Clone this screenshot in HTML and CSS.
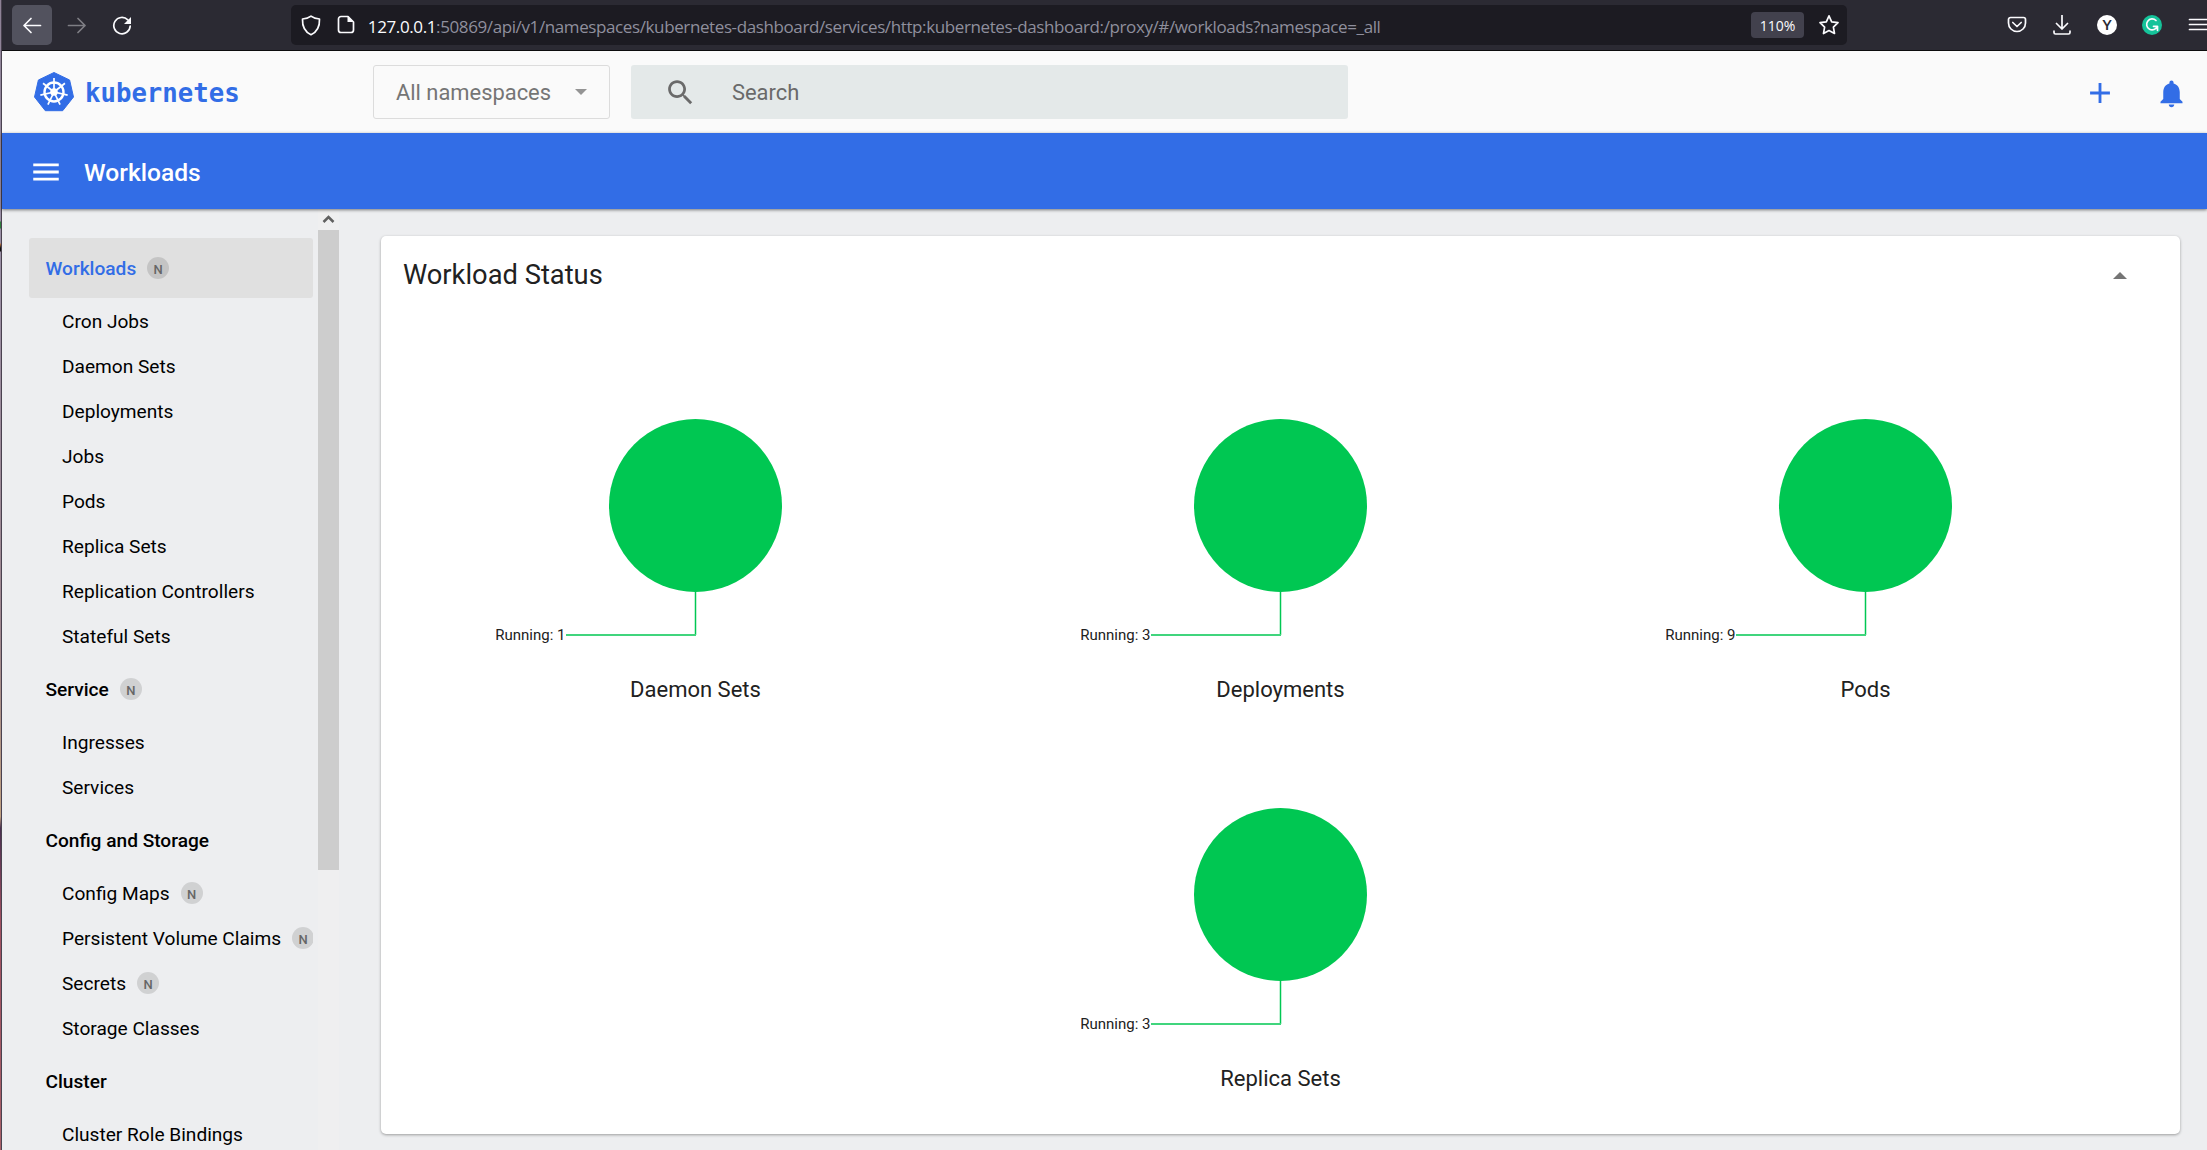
FILE: index.html
```html
<!DOCTYPE html>
<html lang="en">
<head>
<meta charset="utf-8">
<title>Kubernetes Dashboard</title>
<link rel="stylesheet" href="styles.css">
</head>
<body>
<div class="edge"></div>
<div class="window">
  <div class="chrome">
    <div class="nav-btn nav-active"><svg width="20" height="20" viewBox="0 0 20 20"><path d="M18.500 10.500H2M9 3.500L2 10.500l7 7"/></svg></div>
    <div class="nav-btn nav-dim"><svg width="20" height="20" viewBox="0 0 20 20"><path d="M1.500 10.500H18M11 3.500l7 7-7 7"/></svg></div>
    <div class="nav-btn nav-reload"><svg width="20" height="20" viewBox="0 0 20 20"><path d="M15.800 4.800A8.200 8.200 0 1 0 18.200 11"/><path class="solid" d="M19 2v7h-7z"/></svg></div>
    <div class="url-bar">
      <svg class="shield" width="20" height="21" viewBox="0 0 20 21"><path d="M10 1.200C7.500 3.200 4.500 3.800 1.500 4c-.3 7 1.500 12.500 8.500 15.700C17 16.500 18.800 11 18.500 4 15.500 3.800 12.500 3.200 10 1.200z"/></svg>
      <svg class="page-icon" width="18" height="20" viewBox="0 0 18 20"><path d="M11 1.500H4A2.500 2.500 0 0 0 1.500 4v11A2.500 2.500 0 0 0 4 17.500h10a2.500 2.500 0 0 0 2.500-2.500V7z"/><path class="solid" d="M10.500 1l6 6h-6z"/></svg>
      <span class="url"><b>127.0.0.1</b>:50869/api/v1/namespaces/kubernetes-dashboard/services/http:kubernetes-dashboard:/proxy/#/workloads?namespace=_all</span>
      <span class="zoom">110%</span>
      <svg class="star" width="22" height="22" viewBox="0 0 22 22"><path d="M11 1.800l2.700 6 6.300.8-4.600 4.500 1.100 6.400L11 16.500l-5.500 3 1.100-6.400L2 8.600l6.300-.8z"/></svg>
    </div>
    <div class="tools">
      <svg width="20" height="20" viewBox="0 0 20 20"><path d="M3.500 2.500h13a2 2 0 0 1 2 2V8a8.500 8.500 0 0 1-17 0V4.500a2 2 0 0 1 2-2zM5.800 7.500l4.200 4 4.200-4"/></svg>
      <svg width="20" height="20" viewBox="0 0 20 20"><path d="M10 0v14M4.500 8.500L10 14l5.500-5.500M2 16v1.500a1.500 1.500 0 0 0 1.500 1.500h13a1.500 1.500 0 0 0 1.500-1.500V16"/></svg>
      <span class="disc disc-y">Y</span>
      <span class="disc disc-g"><svg width="20" height="20" viewBox="0 0 20 20"><path d="M14 5.500A5.500 5.500 0 1 0 15.300 11.300M11.500 11.300h4v4"/></svg></span>
      <svg width="20" height="20" viewBox="0 0 20 20"><path d="M2.500 4.500H20M2.500 9.500H20M2.500 14.500H20"/></svg>
    </div>
  </div>

  <header class="top">
    <svg class="logo" width="42" height="42" viewBox="-21 -21 42 42">
      <path class="hept" d="M0-19.500L15.600-12 19.500 5 8.700 18.700H-8.700L-19.500 5-15.600-12z"/>
      <g class="wheel">
        <circle r="9.500"/><circle class="hub" r="2.600"/>
        <path d="M0 0V-14"/>
        <path d="M0 0V-14" transform="rotate(51.430)"/><path d="M0 0V-14" transform="rotate(102.860)"/><path d="M0 0V-14" transform="rotate(154.290)"/><path d="M0 0V-14" transform="rotate(205.710)"/><path d="M0 0V-14" transform="rotate(257.140)"/><path d="M0 0V-14" transform="rotate(308.570)"/>
      </g>
    </svg>
    <span class="brand">kubernetes</span>
    <div class="select"><span>All namespaces</span><i class="caret"></i></div>
    <div class="search">
      <svg width="33" height="33" viewBox="0 0 24 24"><path d="M15.500 14h-.79l-.28-.27C15.410 12.590 16 11.110 16 9.500 16 5.910 13.090 3 9.500 3S3 5.910 3 9.500 5.910 16 9.500 16c1.610 0 3.090-.59 4.230-1.570l.27.28v.79l5 4.990L20.490 19l-4.990-5zm-6 0C7.010 14 5 11.990 5 9.500S7.010 5 9.500 5 14 7.010 14 9.500 11.990 14 9.500 14z"/></svg>
      <span>Search</span>
    </div>
    <div class="actions">
      <svg width="34" height="34" viewBox="0 0 24 24"><path d="M19 13h-6v6h-2v-6H5v-2h6V5h2v6h6v2z"/></svg>
      <svg width="33" height="33" viewBox="0 0 24 24"><path d="M12 22c1.100 0 2-.9 2-2h-4c0 1.100.89 2 2 2zm6-6v-5c0-3.070-1.640-5.640-4.500-6.320V4c0-.83-.67-1.500-1.500-1.500s-1.500.67-1.500 1.500v.68C7.630 5.360 6 7.920 6 11v5l-2 2v1h16v-1l-2-2z"/></svg>
    </div>
  </header>

  <div class="bar">
    <svg width="34" height="34" viewBox="0 0 24 24"><path d="M3 18h18v-2H3v2zm0-5h18v-2H3v2zm0-7v2h18V6H3z"/></svg>
    <span>Workloads</span>
  </div>

  <div class="body">
    <nav class="side">
      <a class="group selected">Workloads<em>N</em></a>
      <a>Cron Jobs</a><a>Daemon Sets</a><a>Deployments</a><a>Jobs</a><a>Pods</a><a>Replica Sets</a><a>Replication Controllers</a><a>Stateful Sets</a>
      <a class="group">Service<em>N</em></a>
      <a>Ingresses</a><a>Services</a>
      <a class="group">Config and Storage</a>
      <a>Config Maps<em>N</em></a><a>Persistent Volume Claims<em>N</em></a><a>Secrets<em>N</em></a><a>Storage Classes</a>
      <a class="group">Cluster</a>
      <a>Cluster Role Bindings</a>
    </nav>
    <div class="scroll">
      <svg width="21" height="21" viewBox="0 0 21 21"><path d="M5.500 13l5-5 5 5"/></svg>
      <div class="thumb"></div>
    </div>
    <main class="card">
      <div class="card-head"><h1>Workload Status</h1><i class="up"></i></div>
      <div class="charts">
        <figure><svg width="400" height="260" viewBox="0 0 400 260"><circle cx="199.500" cy="110.500" r="86.500"/><path class="leg" d="M199.500 196V240"/><path class="arm" d="M70 240H200"/><text x="69.500" y="245">Running: 1</text></svg><figcaption>Daemon Sets</figcaption></figure>
        <figure><svg width="400" height="260" viewBox="0 0 400 260"><circle cx="199.500" cy="110.500" r="86.500"/><path class="leg" d="M199.500 196V240"/><path class="arm" d="M70 240H200"/><text x="69.500" y="245">Running: 3</text></svg><figcaption>Deployments</figcaption></figure>
        <figure><svg width="400" height="260" viewBox="0 0 400 260"><circle cx="199.500" cy="110.500" r="86.500"/><path class="leg" d="M199.500 196V240"/><path class="arm" d="M70 240H200"/><text x="69.500" y="245">Running: 9</text></svg><figcaption>Pods</figcaption></figure>
        <figure><svg width="400" height="260" viewBox="0 0 400 260"><circle cx="199.500" cy="110.500" r="86.500"/><path class="leg" d="M199.500 196V240"/><path class="arm" d="M70 240H200"/><text x="69.500" y="245">Running: 3</text></svg><figcaption>Replica Sets</figcaption></figure>
      </div>
    </main>
  </div>
</div>
</body>
</html>
```
FILE: styles.css
```css
* { box-sizing: border-box; }
body { margin: 0; width: 2207px; height: 1150px; overflow: hidden; display: flex; font-family: Roboto, sans-serif; background: #edeef0; }
svg { display: block; flex: none; }
.edge { width: 2px; flex: none; border-right: 1px solid #4a4250; background: linear-gradient(#8d8195 0, #9a8fa5 221px, #2f7d3c 222px, #2f7d3c 228px, #9a8fa5 229px, #9a8fa5 243px, #c07840 244px, #111 248px, #111 251px, #9a8fa5 252px, #a08890 55%, #c0a080 71%, #4a3050 72%, #a05060 80%, #a86068); }
.window { flex: 1; min-width: 0; display: flex; flex-direction: column; }

.chrome { height: 51px; flex: none; display: flex; align-items: flex-start; padding: 5px 0 0 10px; background: #2b2a33; border-bottom: 1px solid #0c0c0d; }
.chrome svg { fill: none; stroke: #fbfbfe; stroke-width: 1.700; stroke-linecap: round; stroke-linejoin: round; }
.chrome .solid { fill: #fbfbfe; stroke: none; }
.nav-btn { width: 40px; height: 40px; margin-right: 5px; border-radius: 5px; display: flex; align-items: center; justify-content: center; }
.nav-active { background: #52525e; }
.nav-dim { opacity: .4; }
.url-bar { width: 1558px; height: 40px; margin-left: 144px; padding-left: 10px; border-radius: 5px; background: #1c1b22; display: flex; align-items: center; }
.page-icon { margin: 0 13px 0 16px; }
.url { flex: 1; padding-top: 2px; font: 17px "Open Sans", sans-serif; letter-spacing: -.39px; color: #8f8f9d; white-space: nowrap; }
.url b { font-weight: 400; color: #fbfbfe; }
.zoom { width: 53px; height: 26px; border-radius: 4px; background: #42414d; color: #fbfbfe; font: 14px/28px "Open Sans", sans-serif; text-align: center; }
.star { margin: 0 7px 0 14px; }
.tools { display: flex; gap: 25px; margin: 10px 0 0 160px; }
.disc { width: 20px; height: 20px; border-radius: 50%; font: 700 14px/20px Lato, sans-serif; text-align: center; }
.disc-y { background: #fff; color: #2b2a33; }
.disc-g { background: #15c39a; }

.top { height: 82px; flex: none; display: flex; align-items: center; padding: 0 19px 0 31px; background: #fafafa; }
.hept { fill: #326de6; stroke: #326de6; stroke-width: 1; stroke-linejoin: round; }
.wheel { fill: none; stroke: #fff; stroke-width: 1.700; }
.wheel circle { stroke-width: 2.400; }
.brand { width: 288px; margin-left: 10px; font: 700 25.700px "DejaVu Sans Mono", monospace; color: #326de6; padding-top: 1px; }
.select { width: 237px; height: 54px; border: 1px solid #dcdcdc; border-radius: 3px; display: flex; align-items: center; justify-content: space-between; padding: 0 22px; font-size: 21.900px; color: #757575; }
.caret { border: 6.500px solid transparent; border-top-color: #949494; border-bottom: 0; }
.search { width: 717px; height: 54px; margin-left: 21px; border-radius: 3px; background: #e4e9e9; display: flex; align-items: center; padding-left: 33px; font-size: 21.900px; color: #6a6a6a; }
.search svg { fill: #6a6a6a; margin-right: 35px; }
.actions { margin-left: auto; display: flex; align-items: center; gap: 38px; fill: #326de6; padding-top: 2px; }

.bar { height: 76px; flex: none; display: flex; align-items: center; padding: 2px 0 0 27px; background: #326de6; color: #fff; font-size: 24.600px; font-weight: 500; box-shadow: 0 1px 3px rgba(0,0,0,.5); position: relative; }
.bar svg { fill: #fff; margin-right: 21px; }

.body { flex: 1; min-height: 0; display: flex; }
.side { width: 311px; flex: none; padding: 29px 0 0 27px; overflow: hidden; }
.side a { display: flex; align-items: center; height: 45px; padding-left: 33px; font-size: 19.120px; color: #000; white-space: nowrap; }
.side .group { height: 61px; padding-left: 16.500px; font-weight: 500; }
.side .selected { height: 60px; margin-bottom: .5px; background: #e0e0e0; border-radius: 3px; color: #326de6; }
.side em { width: 22px; height: 22px; flex: none; margin-left: 11px; border-radius: 50%; background: rgba(0,0,0,.12); color: #666; font: 500 13px/25px Roboto, sans-serif; text-align: center; }
.scroll { width: 21px; margin-left: 5px; flex: none; background: #efeff0; }
.scroll svg { fill: none; stroke: #606060; stroke-width: 2.500; }
.thumb { height: 640px; background: #cdcdcd; }

.card { width: 1799px; height: 898px; margin: 27px 0 0 42px; border-radius: 5px; background: #fff; box-shadow: 0 1px 3px rgba(0,0,0,.35); flex: none; }
.card-head { height: 78px; display: flex; align-items: center; justify-content: space-between; padding: 0 53px 0 22px; }
h1 { margin: 0; font-size: 27.300px; font-weight: 400; color: #212121; }
.up { border: 7px solid transparent; border-bottom-color: #757575; border-top: 0; }
.charts { display: flex; flex-wrap: wrap; justify-content: center; padding: 81px 22px 0; }
figure { width: 585px; height: 389px; margin: 0; display: flex; flex-direction: column; align-items: center; }
figure circle { fill: #00c752; }
.leg { stroke: #00c752; stroke-width: 1.500; }
.arm { stroke: #40d57d; stroke-width: 2; }
figure text { font-size: 15px; text-anchor: end; fill: #212121; }
figcaption { margin-top: 22px; font-size: 22px; line-height: 26px; color: #212121; }
```
